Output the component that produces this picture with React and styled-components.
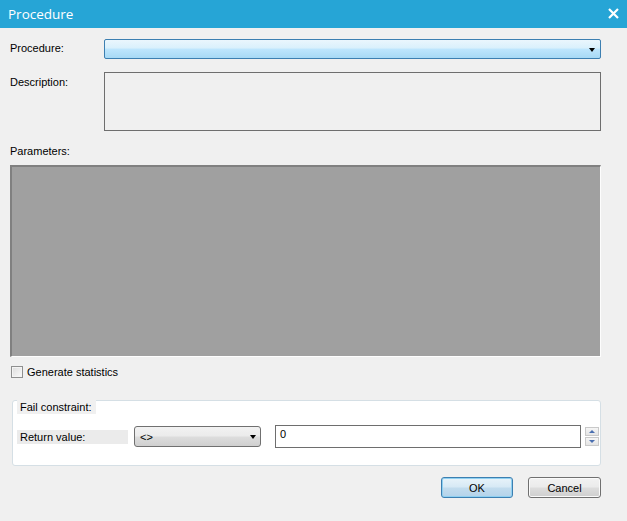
import React from 'react'
import styled, { createGlobalStyle } from 'styled-components'

const GlobalStyle = createGlobalStyle`
  html, body {
    margin: 0;
    padding: 0;
    background: #f0f0f0;
  }
  body {
    font-family: "Liberation Sans", Arial, sans-serif;
    font-size: 11px;
    color: #000;
  }
`

const Dialog = styled.div`
  width: 627px;
  height: 521px;
  background: #f0f0f0;
  display: flex;
  flex-direction: column;
  overflow: hidden;
`

const TitleBar = styled.div`
  height: 28px;
  background: #26a5d6;
  display: flex;
  align-items: center;
  justify-content: space-between;
  padding: 0 8px 0 8px;
  flex-shrink: 0;
`

const Title = styled.div`
  color: #fff;
  font-family: "Open Sans", "Noto Sans", sans-serif;
  font-size: 13.5px;
  margin-top: -1px;
`

const Close = styled.div`
  width: 11px;
  height: 11px;
  display: flex;
  margin-top: -2px;
`

const Body = styled.div`
  padding: 0 26px 0 10px;
  display: flex;
  flex-direction: column;
`

const FieldRow = styled.div`
  display: flex;
  align-items: flex-start;
  margin-top: ${p => p.$top}px;
`

const Label = styled.div`
  width: 94px;
  flex-shrink: 0;
  padding-top: ${p => p.$pad || 0}px;
`

const BlueCombo = styled.div`
  flex: 1;
  height: 20px;
  box-sizing: border-box;
  border: 1px solid #3c7fb1;
  border-radius: 2px;
  background: linear-gradient(#eaf6fd 0%, #d9f0fc 45%, #bee6fd 50%, #a7d9f5 100%);
  display: flex;
  align-items: center;
  justify-content: flex-end;
  padding-right: 5px;
`

const Arrow = styled.span`
  width: 0;
  height: 0;
  border-left: 3.5px solid transparent;
  border-right: 3.5px solid transparent;
  border-top: 4px solid #000;
  margin-top: 1px;
`

const TextArea = styled.div`
  flex: 1;
  height: 59px;
  box-sizing: border-box;
  border: 1px solid #6e6e6e;
  background: #f0f0f0;
`

const SectionLabel = styled.div`
  margin-top: 14px;
  height: 14px;
`

const ParamPanel = styled.div`
  margin-top: 6px;
  height: 192px;
  box-sizing: border-box;
  background: #a0a0a0;
  border-top: 2px solid #808080;
  border-left: 2px solid #808080;
  border-right: 1px solid #fdfdfd;
  border-bottom: 1px solid #fdfdfd;
`

const CheckRow = styled.label`
  display: flex;
  align-items: center;
  margin-top: 9px;
  margin-left: 1px;
  gap: 4px;
`

const CheckBox = styled.span`
  width: 12px;
  height: 12px;
  box-sizing: border-box;
  border: 1px solid #8e8f8f;
  background: linear-gradient(135deg, #dcdcdc, #fafafa);
  box-shadow: inset 0 0 0 1px #f4f4f4;
`

const GroupBox = styled.div`
  margin: 22px 0 0 2px;
  height: 66px;
  box-sizing: border-box;
  background: #fff;
  border: 1px solid #d5dfe5;
  border-radius: 3px;
  position: relative;
  padding: 24px 0 0 4px;
`

const Legend = styled.div`
  position: absolute;
  top: -1px;
  left: 4px;
  height: 14px;
  padding: 0 4px 0 3px;
  background: #f0f0f0;
  line-height: 14px;
`

const GroupRow = styled.div`
  display: flex;
  align-items: center;
`

const GrayLabel = styled.div`
  width: 111px;
  height: 14px;
  line-height: 14px;
  background: #ebebeb;
  padding-left: 3px;
  box-sizing: border-box;
  margin-right: 6px;
`

const GrayCombo = styled.div`
  width: 127px;
  height: 21px;
  box-sizing: border-box;
  border: 1px solid #707070;
  border-radius: 3px;
  background: linear-gradient(#f2f2f2 0%, #ebebeb 48%, #dddddd 52%, #cfcfcf 100%);
  display: flex;
  align-items: center;
  justify-content: space-between;
  padding: 0 4px 0 5px;
  margin-right: 14px;
`

const Input = styled.div`
  width: 306px;
  height: 23px;
  box-sizing: border-box;
  border: 1px solid #6e6e6e;
  background: #fff;
  padding: 2px 0 0 4px;
  margin-right: 4px;
`

const Spinner = styled.div`
  display: flex;
  flex-direction: column;
  gap: 1px;
`

const SpinBtn = styled.div`
  width: 14px;
  height: 9px;
  box-sizing: border-box;
  border: 1px solid #c9c9c9;
  background: linear-gradient(#f6f6f6, #e4e4e4);
  display: flex;
  align-items: center;
  justify-content: center;
`

const SpinArrow = styled.span`
  width: 0;
  height: 0;
  border-left: 3px solid transparent;
  border-right: 3px solid transparent;
  ${p => (p.$up ? 'border-bottom: 3px solid #4a6fb0;' : 'border-top: 3px solid #4a6fb0;')}
`

const ButtonRow = styled.div`
  display: flex;
  justify-content: flex-end;
  gap: 15px;
  margin-top: 11px;
`

const Button = styled.button`
  width: ${p => p.$w}px;
  height: 21px;
  box-sizing: border-box;
  font-family: "Liberation Sans", Arial, sans-serif;
  font-size: 11px;
  border-radius: 3px;
  border: 1px solid ${p => (p.$primary ? '#3c7fb1' : '#707070')};
  background: ${p =>
    p.$primary
      ? 'linear-gradient(#e8f3fa 0%, #d6e9f5 48%, #c2dcee 52%, #b4d3ea 100%)'
      : 'linear-gradient(#f2f2f2 0%, #ebebeb 48%, #dddddd 52%, #cfcfcf 100%)'};
  box-shadow: ${p => (p.$primary ? 'inset 0 0 0 1px #8fd0f1' : 'inset 0 0 0 1px #fafafa')};
  padding: 0;
  color: #000;
`

export default function App() {
  return (
    <>
      <GlobalStyle />
      <Dialog>
        <TitleBar>
          <Title>Procedure</Title>
          <Close>
            <svg width="11" height="11" viewBox="0 0 11 11">
              <path d="M1 1 L10 10 M10 1 L1 10" stroke="#fff" strokeWidth="2.2" />
            </svg>
          </Close>
        </TitleBar>
        <Body>
          <FieldRow $top={11}>
            <Label $pad={3}>Procedure:</Label>
            <BlueCombo>
              <Arrow />
            </BlueCombo>
          </FieldRow>
          <FieldRow $top={13}>
            <Label $pad={4}>Description:</Label>
            <TextArea />
          </FieldRow>
          <SectionLabel>Parameters:</SectionLabel>
          <ParamPanel />
          <CheckRow>
            <CheckBox />
            Generate statistics
          </CheckRow>
          <GroupBox>
            <Legend>Fail constraint:</Legend>
            <GroupRow>
              <GrayLabel>Return value:</GrayLabel>
              <GrayCombo>
                <span>&lt;&gt;</span>
                <Arrow />
              </GrayCombo>
              <Input>0</Input>
              <Spinner>
                <SpinBtn>
                  <SpinArrow $up />
                </SpinBtn>
                <SpinBtn>
                  <SpinArrow />
                </SpinBtn>
              </Spinner>
            </GroupRow>
          </GroupBox>
          <ButtonRow>
            <Button $primary $w={72}>OK</Button>
            <Button $w={73}>Cancel</Button>
          </ButtonRow>
        </Body>
      </Dialog>
    </>
  )
}
